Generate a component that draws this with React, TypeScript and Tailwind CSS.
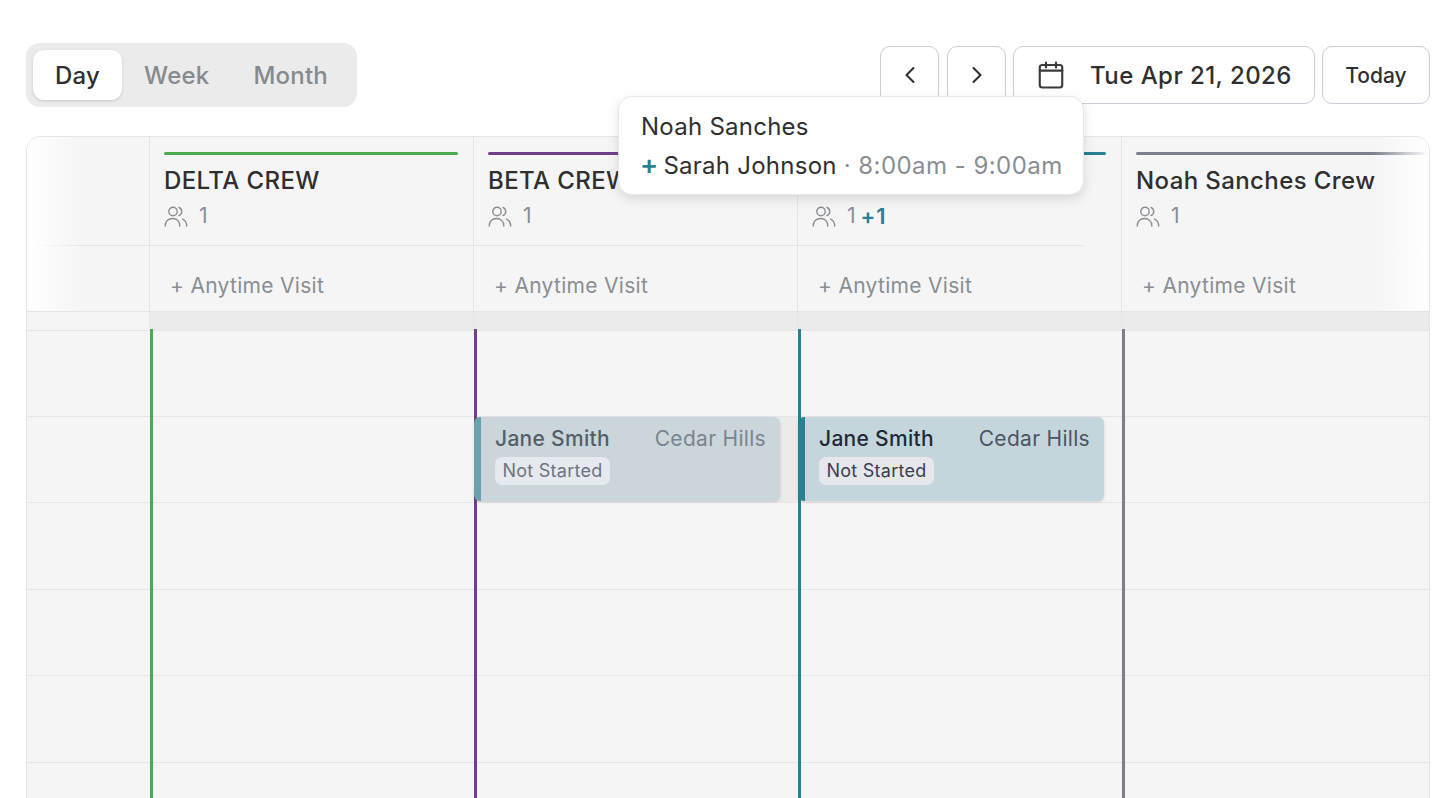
import { ChevronLeft, ChevronRight } from "lucide-react";

const CREWS = [
  {
    name: "DELTA CREW",
    bar: "bg-[#4caa50]",
    line: "border-[#4caa50]",
    cellWidth: "w-[324px]",
    divider: "w-full",
    extra: false,
    border: "border-r",
  },
  {
    name: "BETA CREW",
    bar: "bg-[#6f4088]",
    line: "border-[#6f4088]",
    cellWidth: "w-[324px]",
    divider: "w-full",
    extra: false,
    border: "border-r",
  },
  {
    // name sits behind the tooltip in the picture
    name: "",
    bar: "bg-[#2a7f93]",
    line: "border-[#2a7f93]",
    cellWidth: "w-[324px]",
    divider: "w-[286px]",
    extra: true,
    border: "border-r",
  },
  {
    name: "Noah Sanches Crew",
    bar: "bg-[#7c808c]",
    line: "border-[#7c808c]",
    cellWidth: "w-[307px]",
    divider: "w-0",
    extra: false,
    border: "",
  },
];

const ROWS = ["h-[86px]", "h-[86px]", "h-[87px]", "h-[86px]", "h-[87px]", "h-[87px]"];

function CrewIcon() {
  return (
    <svg width="24" height="22" viewBox="0 0 24 22" fill="none" stroke="currentColor" strokeWidth="1.4" strokeLinecap="round">
      <circle cx="9" cy="6.5" r="4.2" />
      <path d="M1.2 21c0-4.5 3-7.5 7.3-7.5s7.3 3 7.3 7.5" />
      <path d="M15 2.5a4.3 4.3 0 0 1 0 8" />
      <path d="M18.5 14c2.5 1.3 4.2 3.8 4.2 7" />
    </svg>
  );
}

function CalendarIcon() {
  return (
    <svg width="30" height="30" viewBox="0 0 24 24" fill="none" stroke="#3a3a3a" strokeWidth="1.7" strokeLinecap="round">
      <rect x="3" y="4" width="18" height="18" rx="2" />
      <path d="M8 2v4M16 2v4M3 8.5h18" />
    </svg>
  );
}

function VisitCard({ dimmed }: { dimmed: boolean }) {
  return (
    <div
      className={`-ml-[3px] flex h-[84px] w-[306px] shrink-0 flex-col rounded-[6px] border-l-[7px] pl-[14px] pr-[14px] pt-[8px] shadow-[0_1px_3px_rgba(0,0,0,0.14)] ${
        dimmed ? "border-[#69a1ae] bg-[#cbd6db]" : "border-[#2a7f93] bg-[#c4d6dc]"
      }`}
    >
      <div className="flex items-center justify-between tracking-[0.3px]">
        <span className={`text-[21px] font-medium leading-[28px] ${dimmed ? "text-[#545e69]" : "text-[#1f2937]"}`}>
          Jane Smith
        </span>
        <span className={`text-[21px] leading-[28px] ${dimmed ? "text-[#7a858d]" : "text-[#4b5563]"}`}>
          Cedar Hills
        </span>
      </div>
      <span
        className={`mt-[4px] flex h-[28px] w-[115px] items-center justify-center rounded-[7px] pb-px text-[18px] tracking-[0.25px] ${
          dimmed ? "bg-[#e6e9ed] text-[#6b7480]" : "bg-[#e5e7eb] text-[#374151]"
        }`}
      >
        Not Started
      </span>
    </div>
  );
}

export default function App() {
  return (
    <div className="relative h-[798px] overflow-hidden bg-white pl-[26px] pr-[20px] pt-[43px] font-['Inter',sans-serif]">
      <div className="flex items-center justify-between">
        <div className="flex h-[64px] items-center rounded-[14px] bg-[#ebebeb] p-[7px] text-[24px] font-medium tracking-[0.22px]">
          <button className="h-[50px] rounded-[11px] bg-white px-[22px] pt-px text-[#2f2f2f] shadow-[0_1px_3px_rgba(0,0,0,0.15)]">
            Day
          </button>
          <button className="h-[50px] px-[22px] pt-px text-[#858a8e]">Week</button>
          <button className="h-[50px] px-[22px] pt-px text-[#858a8e]">Month</button>
        </div>

        <div className="flex h-[58px] gap-[7px] text-[#2f2f2f]">
          <button className="mr-px flex w-[59px] items-center justify-center rounded-[10px] border border-[#c8cdd6] bg-white">
            <ChevronLeft size={28} strokeWidth={1.8} />
          </button>
          <button className="flex w-[59px] items-center justify-center rounded-[10px] border border-[#c8cdd6] bg-white">
            <ChevronRight size={28} strokeWidth={1.8} />
          </button>
          <button className="flex w-[302px] items-center rounded-[10px] border border-[#c8cdd6] bg-white pl-[22px]">
            <CalendarIcon />
            <span className="ml-[24px] pt-px text-[24px] font-medium tracking-[0.45px]">Tue Apr 21, 2026</span>
          </button>
          <button className="w-[108px] rounded-[10px] border border-[#c8cdd6] bg-white pt-px text-[21px] font-medium">
            Today
          </button>
        </div>
      </div>

      <div className="mt-[29px] overflow-hidden rounded-t-[14px] border border-[#e5e5e5] bg-[#f5f5f5]">
        <div className="relative flex">
          <div className="flex w-[123px] shrink-0 flex-col border-r border-[#e5e5e5]">
            <div className="h-[108px]" />
            <div className="h-px bg-[#e5e5e5]" />
            <div className="h-[65px]" />
          </div>
          {CREWS.map((crew) => (
            <div key={crew.bar} className={`flex shrink-0 flex-col overflow-hidden border-[#e5e5e5] ${crew.cellWidth} ${crew.border}`}>
              <div className="h-[108px] pl-[14px] pt-[15px]">
                <div className={`h-[3px] w-[294px] rounded-full ${crew.bar}`} />
                <div className="mt-[11px] h-[30px] whitespace-nowrap text-[24px] font-medium leading-[30px] tracking-[0.4px] text-[#2f2f2f]">
                  {crew.name}
                </div>
                <div className="mt-[8px] flex h-[24px] items-center text-[21px] text-[#898e93]">
                  <CrewIcon />
                  <span className="ml-[11px]">1</span>
                  {crew.extra && <span className="ml-[5px] text-[22px] font-semibold tracking-[1px] text-[#2a7f93]">+1</span>}
                </div>
              </div>
              <div className={`h-px bg-[#e5e5e5] ${crew.divider}`} />
              <div className="flex h-[65px] items-center pl-[20px] pt-[14px] text-[21px] leading-[28px] tracking-[0.3px] text-[#898e93]">
                + Anytime Visit
              </div>
            </div>
          ))}
          <div className="absolute inset-y-0 left-0 w-[56px] bg-gradient-to-r from-white to-transparent" />
          <div className="absolute inset-y-0 right-0 w-[56px] bg-gradient-to-l from-white to-transparent" />
        </div>

        <div className="flex h-[20px] border-y border-[#e5e5e5]">
          <div className="w-[123px] shrink-0 border-r border-[#e5e5e5]" />
          {CREWS.map((crew) => (
            <div key={crew.bar} className={`shrink-0 border-[#e5e5e5] bg-[#ebebeb] ${crew.cellWidth} ${crew.border}`} />
          ))}
        </div>

        <div className="flex">
          <div className="w-[123px] shrink-0">
            {ROWS.map((row, rowIndex) => (
              <div key={rowIndex} className={`border-b border-[#e5e5e5] ${row}`} />
            ))}
          </div>
          {CREWS.map((crew, colIndex) => (
            <div key={crew.bar} className={`relative -mt-[2px] shrink-0 border-l-[3px] pt-[2px] ${crew.cellWidth} ${crew.line}`}>
              {ROWS.map((row, rowIndex) => (
                <div
                  key={rowIndex}
                  className={`border-b border-[#e5e5e5] ${row} ${rowIndex === 1 && colIndex === 1 ? "bg-[#ebebeb]" : ""}`}
                >
                  {rowIndex === 1 && colIndex === 1 && <VisitCard dimmed />}
                  {rowIndex === 1 && colIndex === 2 && <VisitCard dimmed={false} />}
                </div>
              ))}
            </div>
          ))}
        </div>
      </div>

      <div className="absolute left-[618px] top-[96px] h-[99px] w-[466px] rounded-[14px] border border-[#e8e8e8] bg-white pl-[22px] pt-[13px] text-[24px] leading-[34px] tracking-[0.25px] text-[#2f2f2f] shadow-[0_4px_12px_rgba(0,0,0,0.12)]">
        <div>Noah Sanches</div>
        <div className="mt-[5px] whitespace-nowrap">
          <span className="-ml-[1px] mr-[-2px] text-[27px] font-semibold leading-none text-[#2a7f93]">+</span> Sarah Johnson{" "}
          <span className="tracking-[0.45px] text-[#898e93]">· 8:00am - 9:00am</span>
        </div>
      </div>
    </div>
  );
}
